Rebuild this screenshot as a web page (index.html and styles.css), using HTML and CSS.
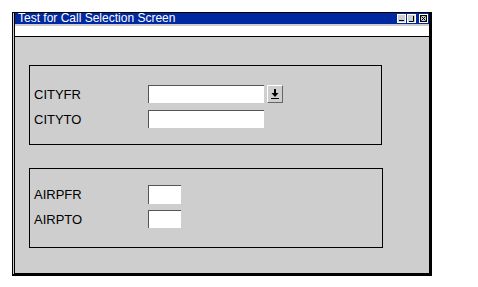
FILE: index.html
```html
<!DOCTYPE html>
<html lang="en">
<head>
    <meta charset="UTF-8">
    <title>Test for Call Selection Screen</title>
    <link rel="stylesheet" href="styles.css">
</head>
<body>
    <div class="window">
        <div class="title-bar">
            <span class="title">Test for Call Selection Screen</span>
            <div class="title-buttons">
                <span class="tbtn"><svg width="7" height="7" viewBox="0 0 7 7"><rect x="1" y="5" width="5" height="1" fill="#000"/></svg></span>
                <span class="tbtn"><svg width="7" height="7" viewBox="0 0 7 7"><path d="M5.5 1v5.5H1" stroke="#000" fill="none"/></svg></span>
                <span class="tbtn close"><svg width="7" height="7" viewBox="0 0 7 7"><rect x="0.5" y="0.5" width="6" height="6" stroke="#000" fill="none"/><path d="M1.5 1.5l4 4M5.5 1.5l-4 4" stroke="#000"/></svg></span>
            </div>
        </div>
        <div class="menu-band"></div>
        <div class="content">
            <div class="group first">
                <div class="row">
                    <label class="field-label">CITYFR</label>
                    <div class="field wide"></div>
                    <span class="drop-btn"><svg width="10" height="12" viewBox="0 0 10 12"><path d="M4 1h2v4h2.5L5 9 1.5 5H4z" fill="#000"/><rect x="1" y="10" width="8" height="1" fill="#000"/></svg></span>
                </div>
                <div class="row">
                    <label class="field-label">CITYTO</label>
                    <div class="field wide"></div>
                </div>
            </div>
            <div class="group second">
                <div class="row">
                    <label class="field-label">AIRPFR</label>
                    <div class="field short"></div>
                </div>
                <div class="row">
                    <label class="field-label">AIRPTO</label>
                    <div class="field short"></div>
                </div>
            </div>
        </div>
    </div>
</body>
</html>
```

FILE: styles.css
```css
body {
    margin: 0;
    background: #fff;
    font-family: "Liberation Sans", Arial, sans-serif;
}
.window {
    margin: 12px 0 0 12px;
    width: 414px;
    height: 260px;
    border-top: 1px solid #000;
    border-left: 3px double #000;
    border-right: 3px solid #000;
    border-bottom: 3px solid #000;
    background: #cecece;
    display: flex;
    flex-direction: column;
}
.title-bar {
    height: 11px;
    background: #0028a0;
    color: #fff;
    display: flex;
    align-items: center;
    justify-content: space-between;
    padding-left: 3px;
}
.title {
    font-size: 12px;
    line-height: 11px;
}
.title-buttons {
    display: flex;
    gap: 1px;
    margin-right: 1px;
    align-self: flex-start;
    margin-top: 1px;
}
.tbtn {
    width: 7px;
    height: 7px;
    background: #cecece;
    border: 1px solid #fff;
    display: flex;
}
.tbtn.close {
    margin-left: 2px;
}
.menu-band {
    margin-top: 2px;
    height: 10px;
    background: #fff;
    border-bottom: 1px solid #000;
}
.content {
    padding: 28px 0 0 14px;
    display: flex;
    flex-direction: column;
    gap: 23px;
}
.group {
    box-sizing: border-box;
    height: 80px;
    border: 1px solid #000;
    display: flex;
    flex-direction: column;
    gap: 7px;
}
.group.first {
    width: 353px;
    padding-top: 19px;
}
.group.second {
    width: 354px;
    padding-top: 16px;
    gap: 6px;
}
.row {
    display: flex;
    align-items: center;
    height: 18px;
    padding-left: 4px;
    font-size: 13px;
    color: #000;
}
.group.second .row:first-child {
    height: 19px;
}
.field-label {
    width: 114px;
}
.field {
    height: 17px;
    background: #fff;
    border-top: 1px solid #555;
    border-left: 1px solid #555;
}
.field.wide {
    width: 115px;
}
.field.short {
    width: 32px;
}
.group.second .row:first-child .field {
    height: 18px;
}
.drop-btn {
    margin-left: 3px;
    width: 14px;
    height: 16px;
    background: #cecece;
    border: 1px solid #fff;
    border-right-color: #666;
    border-bottom-color: #666;
    display: flex;
    align-items: center;
    justify-content: center;
}
```
